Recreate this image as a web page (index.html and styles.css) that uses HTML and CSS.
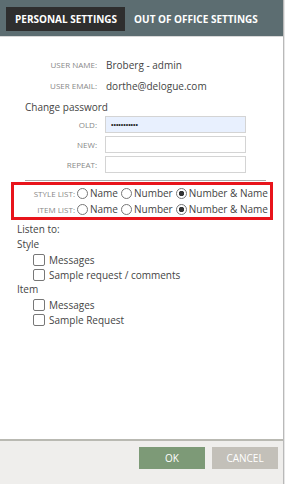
FILE: index.html
```html
<!DOCTYPE html>
<html lang="en">
<head>
    <meta charset="UTF-8">
    <title>Settings</title>
    <link rel="stylesheet" href="styles.css">
</head>
<body>

<div class="dialog">
    <div class="tabs">
        <div class="tab active">PERSONAL SETTINGS</div>
        <div class="tab">OUT OF OFFICE SETTINGS</div>
    </div>

    <div class="content">
        <div class="info-row">
            <span class="label">USER NAME:</span>
            <span class="value">Broberg - admin</span>
        </div>
        <div class="info-row">
            <span class="label">USER EMAIL:</span>
            <span class="value">dorthe@delogue.com</span>
        </div>

        <div class="section-title">Change password</div>
        <div class="input-row">
            <label for="old">OLD:</label>
            <input type="password" id="old" class="filled" value="12345678901">
        </div>
        <div class="input-row">
            <label for="new">NEW:</label>
            <input type="password" id="new">
        </div>
        <div class="input-row">
            <label for="repeat">REPEAT:</label>
            <input type="password" id="repeat">
        </div>

        <hr class="separator">

        <div class="highlight">
            <div class="radio-row">
                <span class="label">STYLE LIST:</span>
                <label class="radio"><input type="radio" name="style"> Name</label>
                <label class="radio"><input type="radio" name="style"> Number</label>
                <label class="radio"><input type="radio" name="style" checked> Number &amp; Name</label>
            </div>
            <div class="radio-row">
                <span class="label">ITEM LIST:</span>
                <label class="radio"><input type="radio" name="item"> Name</label>
                <label class="radio"><input type="radio" name="item"> Number</label>
                <label class="radio"><input type="radio" name="item" checked> Number &amp; Name</label>
            </div>
        </div>

        <div class="listen">
            <div class="line">Listen to:</div>
            <div class="line">Style</div>
            <label class="check"><input type="checkbox"> Messages</label>
            <label class="check"><input type="checkbox"> Sample request / comments</label>
            <div class="line">Item</div>
            <label class="check"><input type="checkbox"> Messages</label>
            <label class="check"><input type="checkbox"> Sample Request</label>
        </div>
    </div>

    <div class="footer">
        <button class="btn ok">OK</button>
        <button class="btn cancel">CANCEL</button>
    </div>
</div>

</body>
</html>
```

FILE: styles.css
```css
body {
    margin: 0;
    font-family: "Open Sans", Arial, sans-serif;
    font-size: 10px;
    color: #444;
    background: #e6e6e6;
    white-space: nowrap;
}
.dialog {
    width: 283px;
    height: 484px;
    background: #fff;
    border-right: 1px solid #b9b9b9;
    display: flex;
    flex-direction: column;
}
.tabs {
    height: 37px;
    box-sizing: border-box;
    background: #5c6d71;
    padding: 7px 6px 0;
    display: flex;
    border-bottom: 1px solid #d8d8d8;
}
.tab {
    height: 24px;
    line-height: 24px;
    padding: 0 8px 0 9px;
    color: #fff;
    font-weight: bold;
    font-size: 10px;
}
.tab.active {
    background: #2e2e2e;
}
.content {
    flex: 1;
    padding-top: 17px;
}
.info-row {
    display: flex;
    align-items: center;
    height: 21px;
}
.label {
    width: 97px;
    text-align: right;
    font-size: 8px;
    color: #888;
    flex-shrink: 0;
}
.info-row .value {
    margin-left: 9px;
    color: #444;
}
.section-title {
    margin: 2px 0 0 25px;
    height: 18px;
    line-height: 18px;
}
.input-row {
    display: flex;
    align-items: center;
    margin-bottom: 3px;
}
.input-row label {
    width: 97px;
    text-align: right;
    font-size: 8px;
    color: #888;
}
.input-row input {
    margin: 0 0 0 8px;
    width: 141px;
    height: 17px;
    box-sizing: border-box;
    border: 1px solid #d4d4d4;
    padding: 0 5px;
    font-size: 7px;
    color: #222;
    outline: none;
}
.input-row input.filled {
    background: #e8f0fe;
}
.separator {
    margin: 7px 17px 1px 25px;
    border: 0;
    border-top: 1px solid #a9a9a9;
}
.highlight {
    margin: 0 10px 0 11px;
    border: 3px solid #e8141b;
}
.radio-row {
    display: flex;
    align-items: center;
    height: 16px;
}
.radio-row .label {
    width: 61px;
}
.radio {
    display: flex;
    align-items: center;
    color: #444;
    margin-right: 1px;
}
.radio input {
    appearance: none;
    width: 11px;
    height: 11px;
    margin: 0 2px 0 2px;
    border: 1px solid #777;
    border-radius: 50%;
    box-sizing: border-box;
    background: #fff;
}
.radio input:checked {
    background: radial-gradient(circle, #333 0 2.5px, #fff 3px);
}
.listen {
    padding: 2px 0 0 17px;
}
.line {
    height: 15px;
    line-height: 15px;
}
.check {
    display: flex;
    align-items: center;
    height: 15px;
    padding-left: 16px;
}
.check input {
    appearance: none;
    width: 12px;
    height: 12px;
    margin: 0 4px 0 0;
    border: 1px solid #777;
    border-radius: 2px;
    box-sizing: border-box;
    background: #fff;
}
.footer {
    height: 37px;
    background: #efeeec;
    border-top: 2px solid #b9b9b2;
    display: flex;
    justify-content: flex-end;
    align-items: flex-start;
    padding: 6px 5px 0 0;
    gap: 7px;
}
.btn {
    width: 66px;
    height: 22px;
    border: none;
    color: #fff;
    font-family: "Open Sans", Arial, sans-serif;
    font-size: 10px;
}
.btn.ok {
    background: #7d9a77;
}
.btn.cancel {
    background: #c3c0b9;
}
```
